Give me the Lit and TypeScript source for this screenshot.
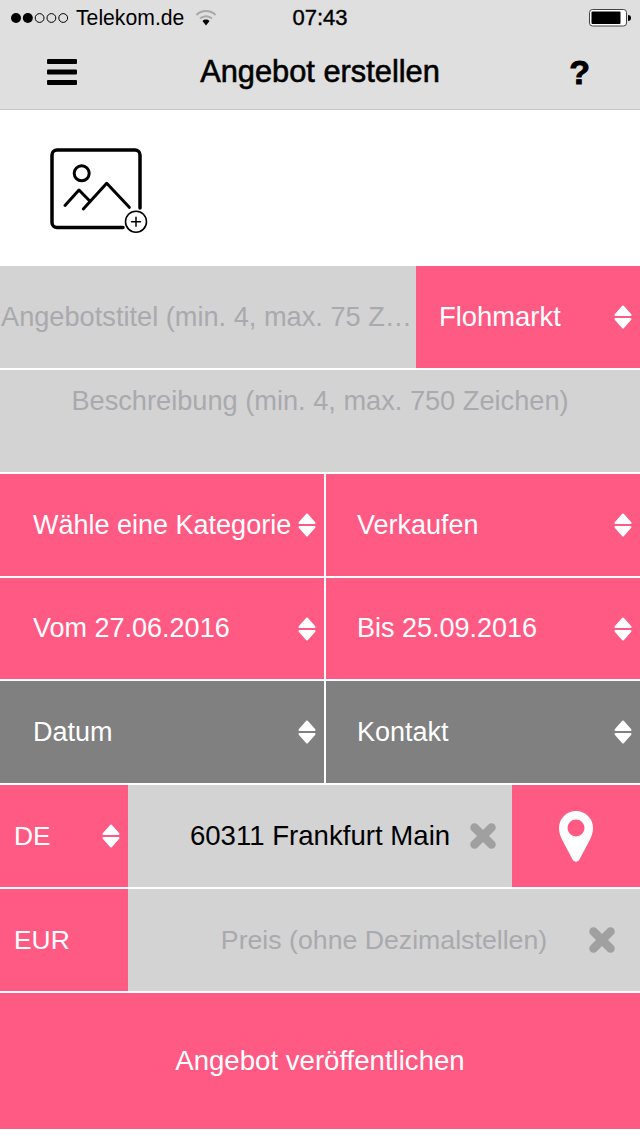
import { LitElement, html, css, svg } from "lit";
import { customElement } from "lit/decorators.js";

const arrows = html`<svg class="arrows" width="18" height="24" viewBox="0 0 18 24">
  <path d="M9 1.5 L16.5 10 H1.5 Z M1.5 14 H16.5 L9 22.5 Z" fill="#fff" stroke="#fff" stroke-width="2" stroke-linejoin="round" />
</svg>`;

const cross = html`<svg class="clear" width="28" height="28" viewBox="0 0 28 28">
  <path d="M5.5 5.5 L22.5 22.5 M22.5 5.5 L5.5 22.5" stroke="#a0a0a0" stroke-width="8.5" stroke-linecap="round" />
</svg>`;

const dots = [0, 1, 2, 3, 4].map((i) =>
  i < 2
    ? svg`<circle cx=${5 + i * 11.8} cy="6" r="5" fill="#000" />`
    : svg`<circle cx=${5 + i * 11.8} cy="6" r="4.4" fill="none" stroke="#000" stroke-width="1" />`
);

@customElement("app-root")
export class AppRoot extends LitElement {
  static styles = css`
    :host {
      display: block;
      width: 640px;
      height: 1136px;
      background: #fff;
      font-family: "Liberation Sans", Arial, sans-serif;
      overflow: hidden;
    }
    .top {
      height: 109px;
      background: #dfdfdf;
      border-bottom: 1px solid #c6c6c6;
      display: flex;
      flex-direction: column;
    }
    .status {
      height: 35px;
      display: grid;
      grid-template-columns: 1fr auto 1fr;
      align-items: center;
      font-size: 21.2px;
      color: #000;
    }
    .status-left {
      display: flex;
      align-items: center;
      padding-left: 11px;
    }
    .carrier {
      margin-left: 8px;
      margin-right: 11px;
    }
    .time {
      font-size: 22px;
      -webkit-text-stroke: 0.4px #000;
    }
    .status-right {
      display: flex;
      justify-content: flex-end;
      padding-right: 8px;
    }
    .nav {
      flex: 1;
      display: grid;
      grid-template-columns: 1fr auto 1fr;
      align-items: center;
    }
    .menu {
      margin-left: 47px;
      display: block;
    }
    .title {
      font-size: 30.8px;
      -webkit-text-stroke: 0.6px #000;
      color: #000;
    }
    .help {
      justify-self: end;
      margin-right: 50px;
      font-size: 34px;
      font-weight: 700;
      line-height: 34px;
      -webkit-text-stroke: 0.9px #000;
      color: #000;
    }
    .photo {
      height: 156px;
      background: #fff;
    }
    .photo svg {
      display: block;
      margin-left: 30px;
      padding-top: 20px;
    }
    .form {
      display: flex;
      flex-direction: column;
      gap: 2px;
    }
    .row {
      display: flex;
      height: 102px;
      gap: 2px;
    }
    .row.tight {
      gap: 0;
    }
    .row.short {
      height: 101px;
    }
    .cell {
      display: flex;
      align-items: center;
      box-sizing: border-box;
      font-size: 27px;
      color: #fff;
      background: #ff5a84;
      white-space: nowrap;
    }
    .cell.dark {
      background: #808080;
    }
    .cell.half-l {
      width: 324px;
      padding: 0 8px 0 33px;
    }
    .cell.half-r {
      width: 314px;
      padding: 0 8px 0 31px;
    }
    .arrows {
      margin-left: auto;
      flex: none;
    }
    .title-input {
      width: 416px;
      flex: none;
      background: #d3d3d3;
      color: #a9a9ae;
      font-size: 27.2px;
      line-height: 102px;
      padding-left: 1px;
      box-sizing: border-box;
      white-space: nowrap;
      overflow: hidden;
      text-overflow: ellipsis;
    }
    .market {
      flex: 1;
      padding: 0 8px 0 23px;
      font-size: 27.4px;
    }
    .desc {
      flex: 1;
      background: #d3d3d3;
      color: #a9a9ae;
      font-size: 27.2px;
      text-align: center;
      padding-top: 15px;
    }
    .cell.code {
      width: 128px;
      padding: 0 8px 0 14px;
      font-size: 26.4px;
    }
    .input {
      position: relative;
      flex: 1;
      display: flex;
      align-items: center;
      justify-content: center;
      background: #d3d3d3;
      font-size: 27.6px;
      color: #000;
    }
    .input.empty {
      color: #a9a9ae;
      font-size: 26.7px;
    }
    .clear {
      position: absolute;
      top: 37px;
      right: 15px;
    }
    .input.empty .clear {
      right: 24px;
    }
    .pin {
      width: 128px;
      flex: none;
      display: flex;
      align-items: center;
      justify-content: center;
      background: #ff5a84;
    }
    .submit {
      height: 136px;
      display: flex;
      align-items: center;
      justify-content: center;
      background: #ff5a84;
      color: #fff;
      font-size: 27.6px;
    }
  `;

  render() {
    return html`
      <div class="top">
        <div class="status">
          <div class="status-left">
            <svg width="57" height="12" viewBox="0 0 57 12">${dots}</svg>
            <span class="carrier">Telekom.de</span>
            <svg width="22" height="17" viewBox="0 0 22 17">
              <path d="M1.5 6 A13.5 13.5 0 0 1 20.5 6" fill="none" stroke="#a8a8a8" stroke-width="2" />
              <path d="M5 9.5 A9 9 0 0 1 17 9.5" fill="none" stroke="#a8a8a8" stroke-width="2" />
              <path d="M7.5 12 L11 16.5 L14.5 12 A5 5 0 0 0 7.5 12 Z" fill="#000" />
            </svg>
          </div>
          <span class="time">07:43</span>
          <div class="status-right">
            <svg width="43" height="18" viewBox="0 0 43 18">
              <rect x="0.5" y="0.5" width="37" height="16.5" rx="3" fill="#fff" stroke="#444" />
              <rect x="2.5" y="2.5" width="29" height="12.5" rx="1" fill="#000" />
              <path d="M39 6 A3 3 0 0 1 39 12 Z" fill="#000" />
            </svg>
          </div>
        </div>
        <div class="nav">
          <svg class="menu" width="30" height="26" viewBox="0 0 30 26">
            <rect x="0" y="0" width="30" height="5" rx="1" fill="#000" />
            <rect x="0" y="10.5" width="30" height="5" rx="1" fill="#000" />
            <rect x="0" y="21" width="30" height="5" rx="1" fill="#000" />
          </svg>
          <span class="title">Angebot erstellen</span>
          <span class="help">?</span>
        </div>
      </div>
      <div class="photo">
        <svg width="140" height="120" viewBox="30 130 140 120" fill="none" stroke="#000" stroke-linecap="round" stroke-linejoin="round">
          <path d="M123 227.5 H57 a5 5 0 0 1 -5 -5 V155 a5 5 0 0 1 5 -5 H135 a5 5 0 0 1 5 5 V208" stroke-width="3.5" />
          <circle cx="81.7" cy="173.3" r="7.5" stroke-width="3" />
          <path d="M65 205.5 L79 190 L89.5 200.7 M83.3 209 L106.7 183.3 L129.3 207.3" stroke-width="3" />
          <circle cx="136" cy="221.7" r="10.5" stroke-width="1.6" />
          <path d="M131.5 221.7 H140.5 M136 217.2 V226.2" stroke-width="1.5" />
        </svg>
      </div>
      <div class="form">
        <div class="row tight">
          <div class="title-input">Angebotstitel (min. 4, max. 75 Zeichen)</div>
          <div class="cell market">Flohmarkt${arrows}</div>
        </div>
        <div class="row">
          <div class="desc">Beschreibung (min. 4, max. 750 Zeichen)</div>
        </div>
        <div class="row">
          <div class="cell half-l">Wähle eine Kategorie${arrows}</div>
          <div class="cell half-r">Verkaufen${arrows}</div>
        </div>
        <div class="row short">
          <div class="cell half-l">Vom 27.06.2016${arrows}</div>
          <div class="cell half-r">Bis 25.09.2016${arrows}</div>
        </div>
        <div class="row">
          <div class="cell half-l dark">Datum${arrows}</div>
          <div class="cell half-r dark">Kontakt${arrows}</div>
        </div>
        <div class="row tight">
          <div class="cell code">DE${arrows}</div>
          <div class="input">60311 Frankfurt Main${cross}</div>
          <div class="pin">
            <svg width="34" height="51" viewBox="0 0 34 51">
              <path
                fill="#fff"
                fill-rule="evenodd"
                d="M17 0 A17 17 0 0 1 34 17 C34 22 32.5 25 31 28.5 L21 47.5 C19 51.8 15 51.8 13 47.5 L3 28.5 C1.5 25 0 22 0 17 A17 17 0 0 1 17 0 Z M17 8.5 A8.5 8.5 0 1 0 17 25.5 A8.5 8.5 0 1 0 17 8.5 Z"
              />
            </svg>
          </div>
        </div>
        <div class="row tight">
          <div class="cell code">EUR</div>
          <div class="input empty">Preis (ohne Dezimalstellen)${cross}</div>
        </div>
        <div class="submit">Angebot veröffentlichen</div>
      </div>
    `;
  }
}
